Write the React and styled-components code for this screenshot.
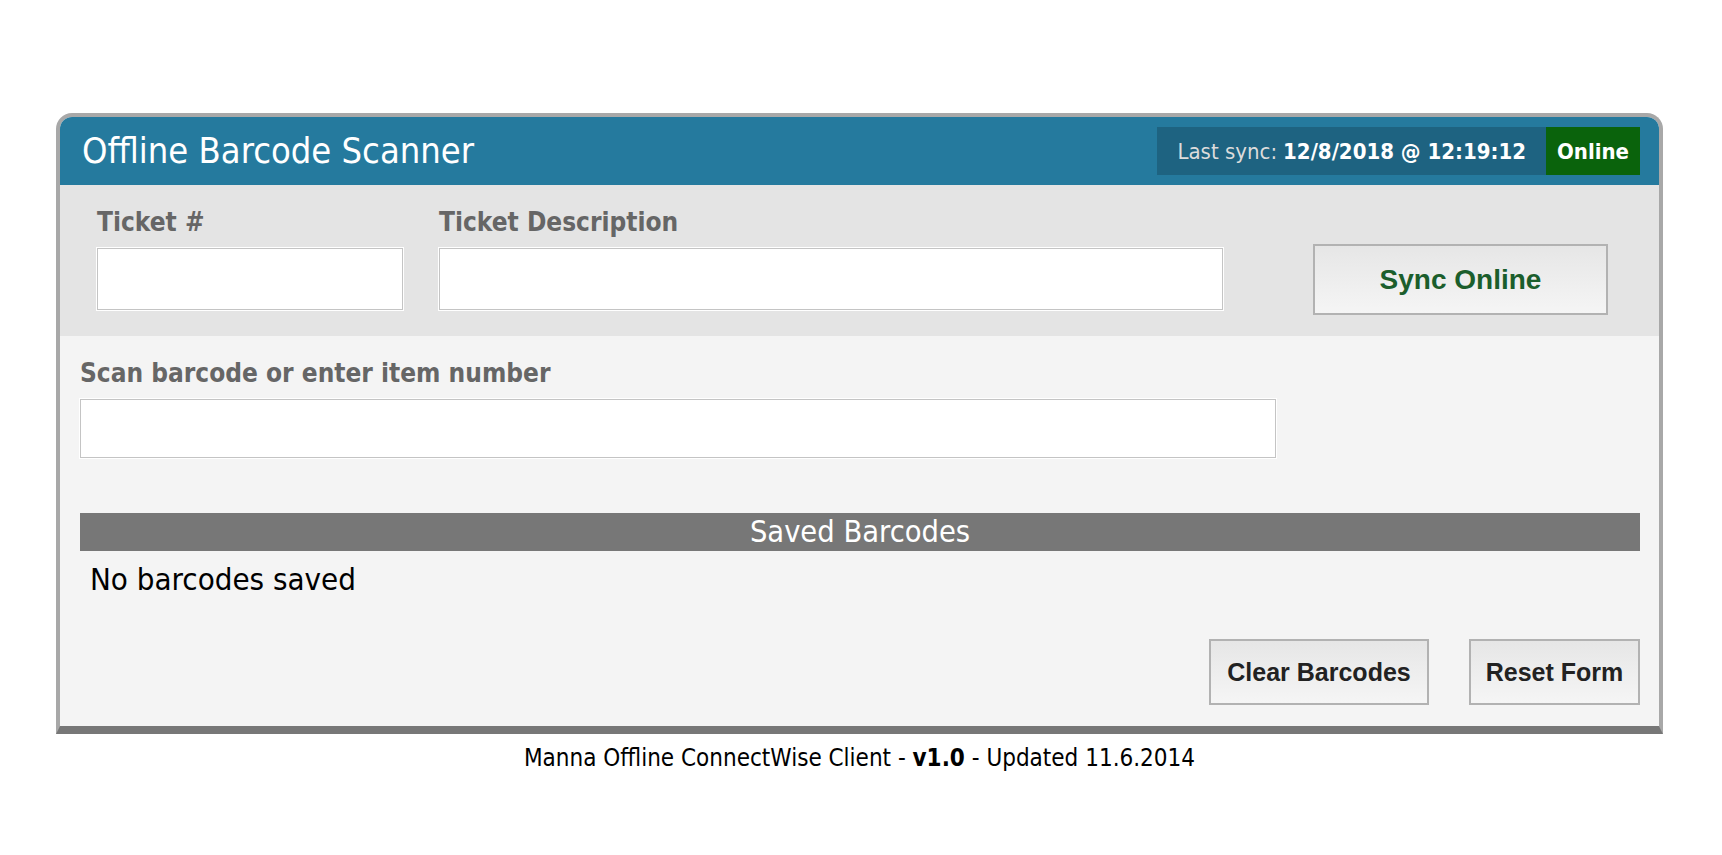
import styled, { createGlobalStyle } from "styled-components";

const GlobalStyle = createGlobalStyle`
    body{
        margin: 0;
        background: #fff;
        font-family: "DejaVu Sans Condensed", "DejaVu Sans", sans-serif;
    }
`

const Page = styled.div`
    padding-top: 113px;
    width: 1607px;
    margin-left: 56px;
`

const Panel = styled.div`
    border: 4px solid #a8a8a8;
    border-bottom: 8px solid #777;
    border-radius: 16px 16px 0 0;
    overflow: hidden;
`

const Header = styled.header`
    background-color: #257a9e;
    height: 68px;
    display: flex;
    align-items: center;
    justify-content: space-between;
    padding: 0 19px 0 22px;

    h1{
        margin: 0;
        color: #fff;
        font-weight: normal;
        font-size: 36px;
        line-height: 40px;
    }
`

const Status = styled.div`
    display: flex;
    height: 48px;
    font-size: 22px;
`

const SyncInfo = styled.div`
    background-color: #1e6381;
    color: #dcdcdc;
    display: flex;
    align-items: center;
    padding: 0 20px;

    b{
        color: #fff;
        margin-left: 6px;
    }
`

const Badge = styled.div`
    background-color: #0a630c;
    color: #fff;
    font-weight: bold;
    display: flex;
    align-items: center;
    padding: 0 11px;
`

const TicketRow = styled.section`
    background-color: #e4e4e4;
    display: flex;
    align-items: flex-end;
    gap: 36px;
    padding: 22px 51px 26px 37px;
`

const Field = styled.label`
    display: flex;
    flex-direction: column;
    gap: 11px;
`

const Label = styled.span`
    color: #666;
    font-weight: bold;
    font-size: 26px;
    line-height: 30px;
`

const Input = styled.input`
    box-sizing: border-box;
    width: ${props => props.$width}px;
    height: ${props => props.$height || 62}px;
    border: 1px solid #c4c4c4;
    box-shadow: 0 0 0 1px #fff;
    background: #fff;
    font-size: 22px;
    padding: 0 10px;
    outline: none;
`

const Button = styled.button`
    box-sizing: border-box;
    width: ${props => props.$width}px;
    height: ${props => props.$height}px;
    border: 2px solid #b2b2b2;
    background: linear-gradient(#e6e6e6, #f5f5f5);
    font-family: "Liberation Sans", Arial, sans-serif;
    font-weight: bold;
    font-size: ${props => props.$size || 25}px;
    color: ${props => props.$color || "#222"};
    cursor: pointer;
    padding: 0;
`

const SyncButton = styled(Button)`
    margin-left: auto;
    margin-bottom: -5px;
`

const ScanSection = styled.section`
    background-color: #f4f4f4;
    padding: 22px 19px 21px 20px;
    display: flex;
    flex-direction: column;
    align-items: flex-start;
`

const SavedBar = styled.div`
    align-self: stretch;
    margin-top: 55px;
    height: 38px;
    background-color: #777;
    color: #fff;
    text-align: center;
    font-size: 30.5px;
    line-height: 38px;
`

const Empty = styled.p`
    margin: 11px 0 0;
    padding-left: 10px;
    font-size: 31px;
    line-height: 35px;
    color: #000;
`

const Actions = styled.div`
    align-self: stretch;
    display: flex;
    justify-content: flex-end;
    gap: 40px;
    margin-top: 42px;
`

const Footer = styled.footer`
    margin-top: 10px;
    text-align: center;
    font-size: 24px;
    line-height: 28px;
    color: #000;
`

export default function App() {
    return (
        <>
            <GlobalStyle />
            <Page>
                <Panel>
                    <Header>
                        <h1>Offline Barcode Scanner</h1>
                        <Status>
                            <SyncInfo>Last sync:<b>12/8/2018 @ 12:19:12</b></SyncInfo>
                            <Badge>Online</Badge>
                        </Status>
                    </Header>
                    <TicketRow>
                        <Field>
                            <Label>Ticket #</Label>
                            <Input $width={306} />
                        </Field>
                        <Field>
                            <Label>Ticket Description</Label>
                            <Input $width={784} />
                        </Field>
                        <SyncButton $width={295} $height={71} $size={28} $color="#1b5e2c">Sync Online</SyncButton>
                    </TicketRow>
                    <ScanSection>
                        <Field>
                            <Label>Scan barcode or enter item number</Label>
                            <Input $width={1196} $height={59} />
                        </Field>
                        <SavedBar>Saved Barcodes</SavedBar>
                        <Empty>No barcodes saved</Empty>
                        <Actions>
                            <Button $width={220} $height={66}>Clear Barcodes</Button>
                            <Button $width={171} $height={66}>Reset Form</Button>
                        </Actions>
                    </ScanSection>
                </Panel>
                <Footer>Manna Offline ConnectWise Client - <b>v1.0</b> - Updated 11.6.2014</Footer>
            </Page>
        </>
    )
}
